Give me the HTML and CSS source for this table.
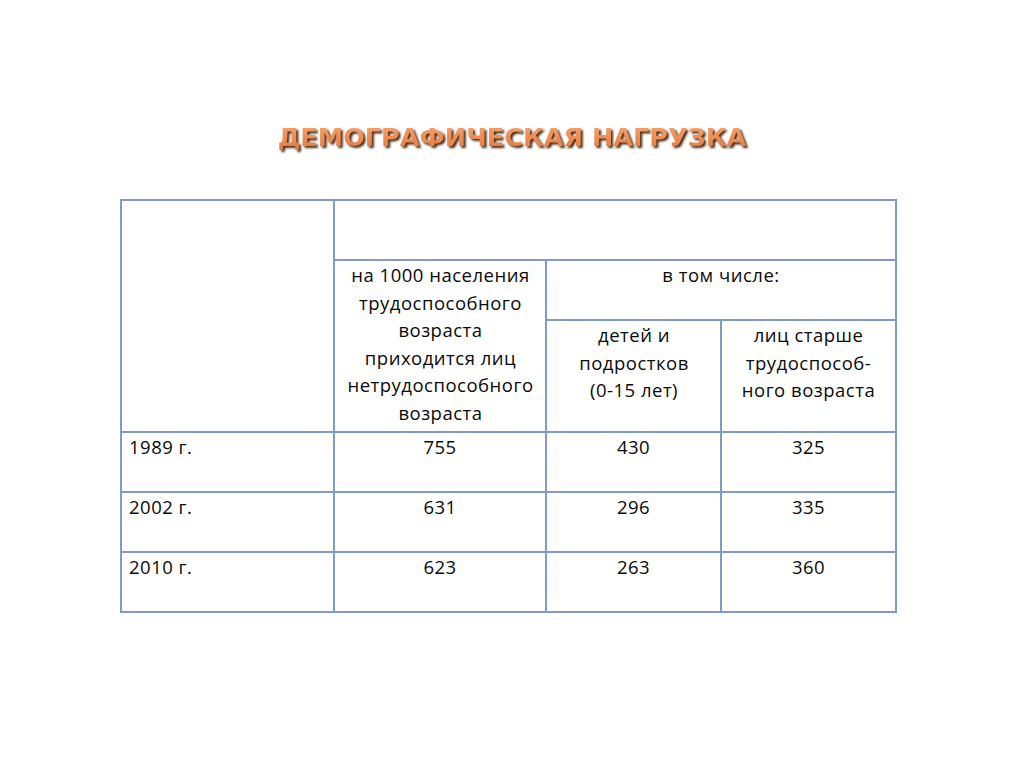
FILE: index.html
```html
<!DOCTYPE html>
<html lang="ru">
<head>
<meta charset="utf-8">
<title>Демографическая нагрузка</title>
<link rel="stylesheet" href="styles.css">
</head>
<body>
<div class="slide">
  <h1 class="title"><span class="title-text">ДЕМОГРАФИЧЕСКАЯ НАГРУЗКА</span></h1>
  <table class="grid">
    <colgroup>
      <col class="c1"><col class="c2"><col class="c3"><col class="c4">
    </colgroup>
    <tr class="r1">
      <td rowspan="3"></td>
      <td colspan="3"></td>
    </tr>
    <tr class="r2">
      <td rowspan="2" class="ctr">на 1000 населения<br>трудоспособного<br>возраста<br>приходится лиц<br>нетрудоспособного<br>возраста</td>
      <td colspan="2" class="ctr">в том числе:</td>
    </tr>
    <tr class="r3">
      <td class="ctr">детей и<br>подростков<br>(0-15 лет)</td>
      <td class="ctr">лиц старше<br>трудоспособ-<br>ного возраста</td>
    </tr>
    <tr class="rd">
      <td>1989 г.</td><td class="ctr">755</td><td class="ctr">430</td><td class="ctr">325</td>
    </tr>
    <tr class="rd">
      <td>2002 г.</td><td class="ctr">631</td><td class="ctr">296</td><td class="ctr">335</td>
    </tr>
    <tr class="rd">
      <td>2010 г.</td><td class="ctr">623</td><td class="ctr">263</td><td class="ctr">360</td>
    </tr>
  </table>
</div>
</body>
</html>
```
FILE: styles.css
```css
html, body {
  margin: 0;
  padding: 0;
  background: #ffffff;
}
.slide {
  width: 1024px;
  height: 768px;
  padding-top: 119px;
  box-sizing: border-box;
}
.title {
  margin: 0;
  text-align: center;
  font-family: "DejaVu Sans", "Liberation Sans", sans-serif;
  font-weight: bold;
  font-size: 25.5px;
  line-height: 36px;
  letter-spacing: 0;
}
.title-text {
  display: inline-block;
  color: transparent;
  background: linear-gradient(to bottom, #f6ab7c 0%, #ee8e55 50%, #e27434 100%);
  -webkit-background-clip: text;
  background-clip: text;
  filter: drop-shadow(2px 2px 0.8px #4a2810);
}
.grid {
  margin: 44px 0 0 120px;
  border-collapse: collapse;
  table-layout: fixed;
  width: 775px;
  font-family: "Open Sans", sans-serif;
  font-size: 18.5px;
  letter-spacing: 0.5px;
  line-height: 27.5px;
  color: #0a0a0a;
}
.grid td {
  border: 2px solid #819bc8;
  vertical-align: top;
  padding: 0 6px;
}
.grid td:first-child { padding-left: 7px; }
.c1 { width: 213px; }
.c2 { width: 212px; }
.c3 { width: 175px; }
.c4 { width: 175px; }
.r1 { height: 60px; }
.r2 { height: 60px; }
.r3 { height: 112px; }
.rd { height: 60px; }
.ctr { text-align: center; }
```
